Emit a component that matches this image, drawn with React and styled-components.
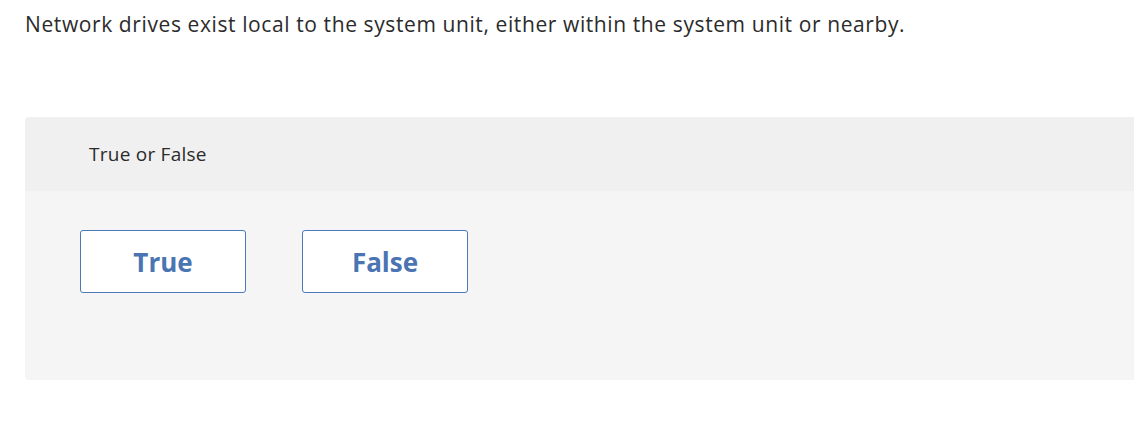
import React from 'react'
import styled, { createGlobalStyle } from 'styled-components'

const GlobalStyle = createGlobalStyle`
    body {
        margin: 0;
        background: #ffffff;
        overflow: hidden;
        font-family: "Open Sans", "Liberation Sans", sans-serif;
    }
`

const Page = styled.div`
    padding: 10px 0 0 25px;
    width: 1134px;
    box-sizing: border-box;
`

const Question = styled.p`
    margin: 0;
    font-size: 21px;
    line-height: 28px;
    letter-spacing: 0.6px;
    color: #2b2b2b;
`

const Panel = styled.div`
    margin-top: 79px;
    width: 1120px;
    border-radius: 4px;
    overflow: hidden;
`

const Header = styled.div`
    background: #f0f0f0;
    height: 74px;
    display: flex;
    align-items: center;
    padding-left: 64px;
    font-size: 19px;
    letter-spacing: 0.25px;
    color: #2b2b2b;
`

const Body = styled.div`
    background: #f5f5f5;
    height: 189px;
    padding: 39px 0 0 55px;
    box-sizing: border-box;
    display: flex;
    align-items: flex-start;
    gap: 56px;
`

const Choice = styled.button`
    width: 166px;
    height: 63px;
    background: #ffffff;
    border: 1px solid #4a78b8;
    border-radius: 3px;
    color: #4a74b2;
    font-family: inherit;
    font-size: 26px;
    font-weight: 700;
    cursor: pointer;
`

const App = () => {
  return (
    <Page>
        <GlobalStyle />
        <Question>Network drives exist local to the system unit, either within the system unit or nearby.</Question>
        <Panel>
            <Header>True or False</Header>
            <Body>
                <Choice>True</Choice>
                <Choice>False</Choice>
            </Body>
        </Panel>
    </Page>
  )
}

export default App
